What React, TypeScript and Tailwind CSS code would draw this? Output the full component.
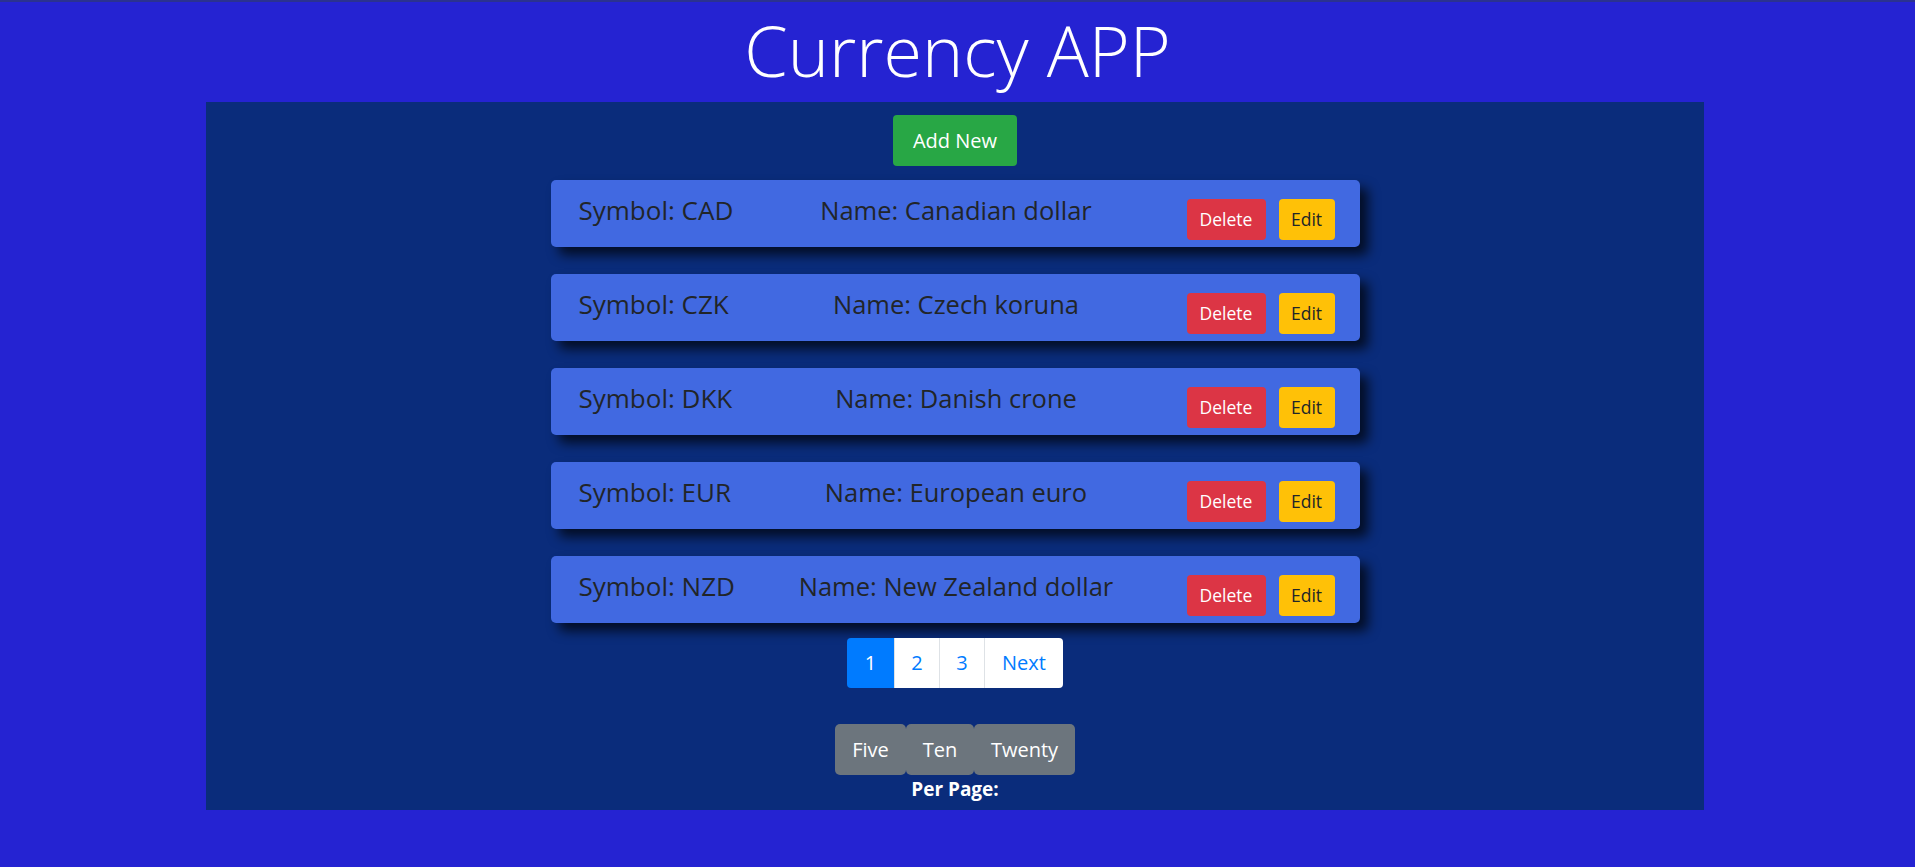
const currencies = [
  { symbol: "CAD", name: "Canadian dollar" },
  { symbol: "CZK", name: "Czech koruna" },
  { symbol: "DKK", name: "Danish crone" },
  { symbol: "EUR", name: "European euro" },
  { symbol: "NZD", name: "New Zealand dollar" },
];

function CurrencyCard({ symbol, name }: { symbol: string; name: string }) {
  return (
    <div className="flex h-[67px] w-[809px] rounded-[5px] bg-[#4169e1] shadow-[8px_8px_12px_rgba(0,0,0,0.7)] text-[#212529]">
      <div className="w-[190px] pl-[28px] pt-[15px] text-[26px] leading-[31px] whitespace-nowrap">
        Symbol: {symbol}
      </div>
      <div className="flex-1 pl-[10px] pt-[15px] text-center text-[25.5px] leading-[31px] whitespace-nowrap">
        Name: {name}
      </div>
      <div className="flex w-[198px] justify-end gap-[13px] pr-[25px] pt-[19px]">
        <button className="h-[41px] w-[79px] rounded-[4px] bg-[#dc3545] text-[17.5px] text-white">Delete</button>
        <button className="h-[41px] w-[56px] rounded-[4px] bg-[#ffc107] text-[17.5px] text-[#212529]">Edit</button>
      </div>
    </div>
  );
}

export default function App() {
  return (
    <div className="min-h-[867px] bg-[#2523d2] border-t-[2px] border-[#2b3290] font-['Open_Sans',sans-serif]">
      <div className="h-[100px] text-center">
        <h1 className="text-[70px] leading-[96px] font-light text-white">Currency APP</h1>
      </div>
      <div className="ml-[206px] flex w-[1498px] flex-col items-center bg-[#0a2c7b] pt-[13px] pb-[7px]">
        <button className="h-[51px] w-[124px] rounded-[4px] bg-[#28a745] text-[20px] text-white">Add New</button>
        <div className="mt-[14px] flex flex-col gap-[27px]">
          {currencies.map((c) => (
            <CurrencyCard key={c.symbol} symbol={c.symbol} name={c.name} />
          ))}
        </div>
        <div className="mt-[15px] flex h-[50px] overflow-hidden rounded-[4px] text-[20px]">
          <span className="flex w-[47px] items-center justify-center bg-[#007bff] text-white">1</span>
          <span className="flex w-[45px] items-center justify-center border-l border-[#dee2e6] bg-white text-[#007bff]">2</span>
          <span className="flex w-[45px] items-center justify-center border-l border-[#dee2e6] bg-white text-[#007bff]">3</span>
          <span className="flex w-[79px] items-center justify-center border-l border-[#dee2e6] bg-white text-[#007bff]">Next</span>
        </div>
        <div className="mt-[36px] flex">
          <button className="h-[51px] w-[71px] rounded-[5px] bg-[#6c757d] text-[20px] text-white">Five</button>
          <button className="h-[51px] w-[68px] rounded-[5px] bg-[#6c757d] text-[20px] text-white">Ten</button>
          <button className="h-[51px] w-[101px] rounded-[5px] bg-[#6c757d] text-[20px] text-white">Twenty</button>
        </div>
        <div className="text-[19px] leading-[28px] font-bold text-white">Per Page:</div>
      </div>
    </div>
  );
}
